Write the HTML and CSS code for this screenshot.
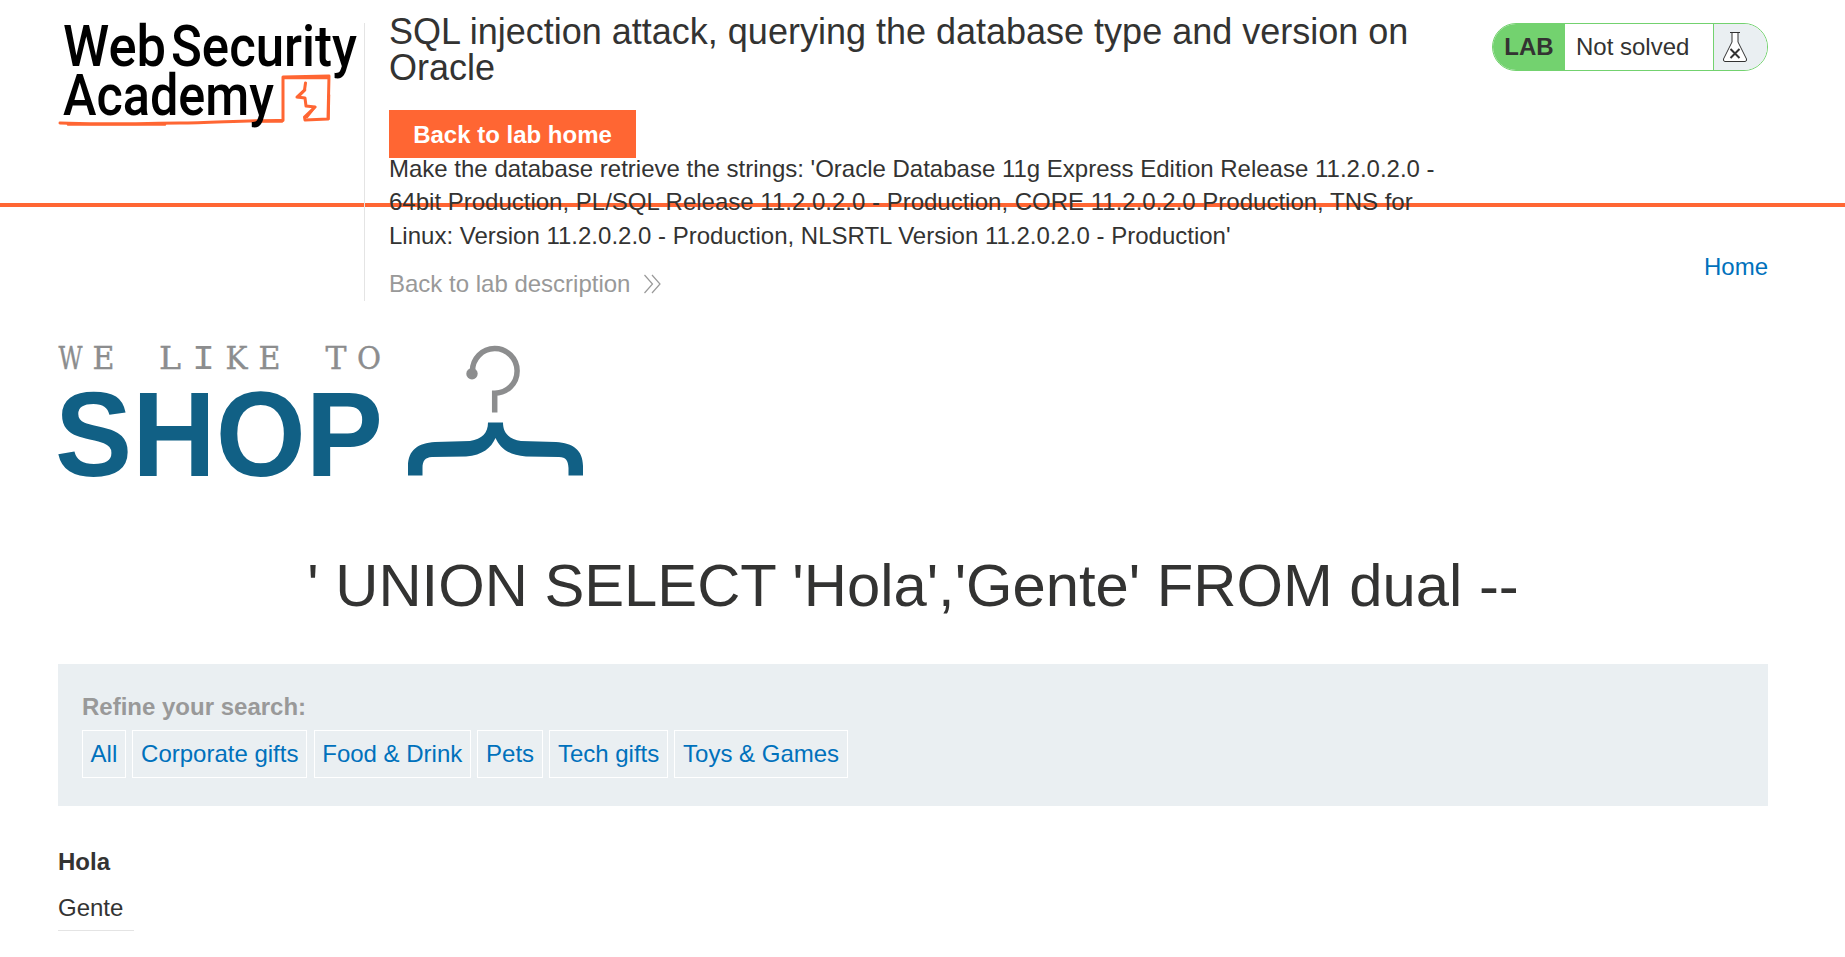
FILE: index.html
```html
<!DOCTYPE html>
<html lang="en">
<head>
<meta charset="utf-8">
<title>SQL injection attack, querying the database type and version on Oracle</title>
<link rel="stylesheet" href="styles.css">
</head>
<body>
<header class="lab-header">
  <div class="logo">
    <svg width="306" height="110" viewBox="58 20 306 110">
      <g class="logo-line" fill="none" stroke="#ff6633" stroke-linejoin="round" stroke-linecap="round">
        <path stroke-width="3" d="M60 123 C100 125 150 123 180 123 S250 120 283 120.500 L283 77 L329 76 L328 119 L305 120 L304.500 117 L315 107 L306 106 L305 98 L297 97 L304.500 90 L305.500 83"/>
        <path stroke-width="2.500" d="M68 124.500 L165 124.500 M284 78 L328 78 M329 95 L328.500 119 M262 121.500L282 121.500 M298 97L305 90 M307 117L315 107"/>
      </g>
      <g class="logo-text">
        <text x="63" y="66" textLength="103" lengthAdjust="spacingAndGlyphs">Web</text>
        <text x="171" y="66" textLength="186" lengthAdjust="spacingAndGlyphs">Security</text>
        <text x="63" y="115" textLength="211" lengthAdjust="spacingAndGlyphs">Academy</text>
      </g>
    </svg>
  </div>
  <div class="title-box">
    <h2 class="lab-title">SQL injection attack, querying the database type and version on Oracle</h2>
    <a class="button">Back to lab home</a>
    <p class="hint">Make the database retrieve the strings: 'Oracle Database 11g Express Edition Release 11.2.0.2.0 - 64bit Production, PL/SQL Release 11.2.0.2.0 - Production, CORE 11.2.0.2.0 Production, TNS for Linux: Version 11.2.0.2.0 - Production, NLSRTL Version 11.2.0.2.0 - Production'</p>
    <a class="back-link"><span>Back to lab description</span>
      <svg width="18" height="20" viewBox="0 0 18 20" fill="none" stroke="#999" stroke-width="1.200"><path d="M.500 1l8 9-8 9M8 1l8 9-8 9"/></svg>
    </a>
  </div>
  <div class="status">
    <span class="status-lab">LAB</span>
    <span class="status-text">Not solved</span>
    <span class="status-icon">
      <svg width="26" height="32" viewBox="0 0 26 32" fill="#fff" stroke="#333" stroke-width="1">
        <path d="M8 1.500h10M10 2v9L1.500 28q-.500 2.500 1.500 2.500h20q2 0 1.500-2.500L16 11V2" />
        <path stroke-width="2" d="M8.500 18l9 9M17.500 18l-9 9"/>
      </svg>
    </span>
  </div>
</header>
<main class="page">
  <nav class="nav"><a>Home</a></nav>
  <section class="shop">
    <svg width="530" height="140" viewBox="58 340 530 140">
      <text class="shop-tag" y="369"><tspan x="58.500" textLength="24" lengthAdjust="spacingAndGlyphs">W</tspan><tspan x="92.500" textLength="22" lengthAdjust="spacingAndGlyphs">E</tspan> <tspan x="159" textLength="22" lengthAdjust="spacingAndGlyphs">L</tspan><tspan class="mono" x="192" textLength="23" lengthAdjust="spacingAndGlyphs">I</tspan><tspan x="225.500" textLength="22" lengthAdjust="spacingAndGlyphs">K</tspan><tspan x="258.500" textLength="22" lengthAdjust="spacingAndGlyphs">E</tspan> <tspan x="325.500" textLength="21" lengthAdjust="spacingAndGlyphs">T</tspan><tspan x="357" textLength="24" lengthAdjust="spacingAndGlyphs">O</tspan></text>
      <text class="shop-name" x="55" y="476" textLength="328" lengthAdjust="spacingAndGlyphs">SHOP</text>
      <path fill="none" stroke="#8c8d8e" stroke-width="5.500" d="M472.500 371.200 A22.300 22.300 0 1 1 494.700 393.200 L494.700 412.500"/>
      <circle cx="472" cy="373.700" r="5.700" fill="#8c8d8e"/>
      <path fill="#116085" d="M488 422.500H503C503 433 509 439 521 441L556 442C573 443 583 450 583 466V475.500H568.500V468C568 460 566 457.500 559 457L526 456.500C508 455 500 448 495.500 438C491 448 483 455 466 456.500L432 457C425 457.500 422.500 461 422.500 468V475.500H408V466C408 450 418 443 435 442L470 441C482 439 488 433 488 422.500Z"/>
    </svg>
  </section>
  <h1 class="query">' UNION SELECT 'Hola','Gente' FROM dual --</h1>
  <section class="filters">
    <div class="filters-label">Refine your search:</div>
    <div class="filters-list"><a>All</a><a>Corporate gifts</a><a>Food &amp; Drink</a><a>Pets</a><a>Tech gifts</a><a>Toys &amp; Games</a></div>
  </section>
  <div class="result">
    <div class="result-name">Hola</div>
    <div class="result-value">Gente</div>
  </div>
</main>
</body>
</html>
```
FILE: styles.css
```css
* { box-sizing: border-box; }
body {
  margin: 0;
  background: #fff;
  color: #333332;
  font: 24px/33.600px "Liberation Sans", Arial, sans-serif;
}
h1, h2, p { margin: 0; font-weight: 400; }
.lab-header {
  display: flex;
  height: 207px;
  padding: 0 77px 0 58px;
  border-bottom: 4px solid #ff6633;
  align-items: flex-start;
}
.logo { flex: none; width: 306px; padding-top: 20px; }
.logo svg, .shop svg { display: block; overflow: visible; }
.logo-text { font-family: Roboto, sans-serif; font-weight: 500; font-size: 57px; fill: #000; }
.title-box {
  flex: none;
  width: 1078px;
  height: 278px;
  margin-top: 23px;
  padding-left: 24px;
  border-left: 1px solid #e4e4e4;
}
.lab-title { margin-top: -9px; font-size: 36px; line-height: 36px; }
.button {
  display: block;
  width: 247px;
  height: 48px;
  margin-top: 24px;
  background: #ff6633;
  color: #fff;
  font-weight: 700;
  line-height: 50px;
  text-align: center;
}
.hint { margin-top: -6.400px; }
.back-link { display: flex; align-items: center; gap: 14px; margin-top: 14.400px; color: #999; }
.status {
  display: flex;
  width: 276px;
  height: 48px;
  margin: 23px 0 0 auto;
  border: 1px solid #73d26f;
  border-radius: 24px;
  overflow: hidden;
  line-height: 46px;
}
.status-lab { width: 72px; background: #73d26f; font-weight: 700; text-align: center; }
.status-text { flex: 1; padding-left: 11px; }
.status-icon { width: 54px; padding: 7px 0 0 8px; border-left: 1px solid #73d26f; background: #eaeff2; }
.status-icon svg { display: block; }
.page { padding: 43px 77px 0 58px; }
.nav { display: flex; justify-content: flex-end; color: #0071bc; }
.shop { padding-top: 56px; }
.shop-tag { font-family: "DejaVu Serif", serif; font-size: 31.500px; fill: #8c8d8e; stroke: #8c8d8e; stroke-width: .4px; }
.shop-tag .mono { font-family: "Liberation Mono", monospace; font-size: 34.500px; stroke: none; }
.shop-name { font-weight: 700; font-size: 121px; fill: #116085; }
.query { margin-top: 71px; font-size: 59.750px; line-height: 70px; text-align: center; }
.filters { height: 142px; margin-top: 43px; padding: 26px 24px; background: #eaeff2; }
.filters-label { color: #999; font-weight: 700; }
.filters-list { display: flex; gap: 6.600px; margin-top: 6.400px; color: #0071bc; }
.filters-list a { height: 48px; padding: 0 7.600px; border: 1px solid #fff; line-height: 46px; }
.result { width: 76px; margin-top: 39px; border-bottom: 1px solid #e4e4e4; }
.result-name { font-weight: 700; }
.result-value { padding: 13px 0 5px; }
```
